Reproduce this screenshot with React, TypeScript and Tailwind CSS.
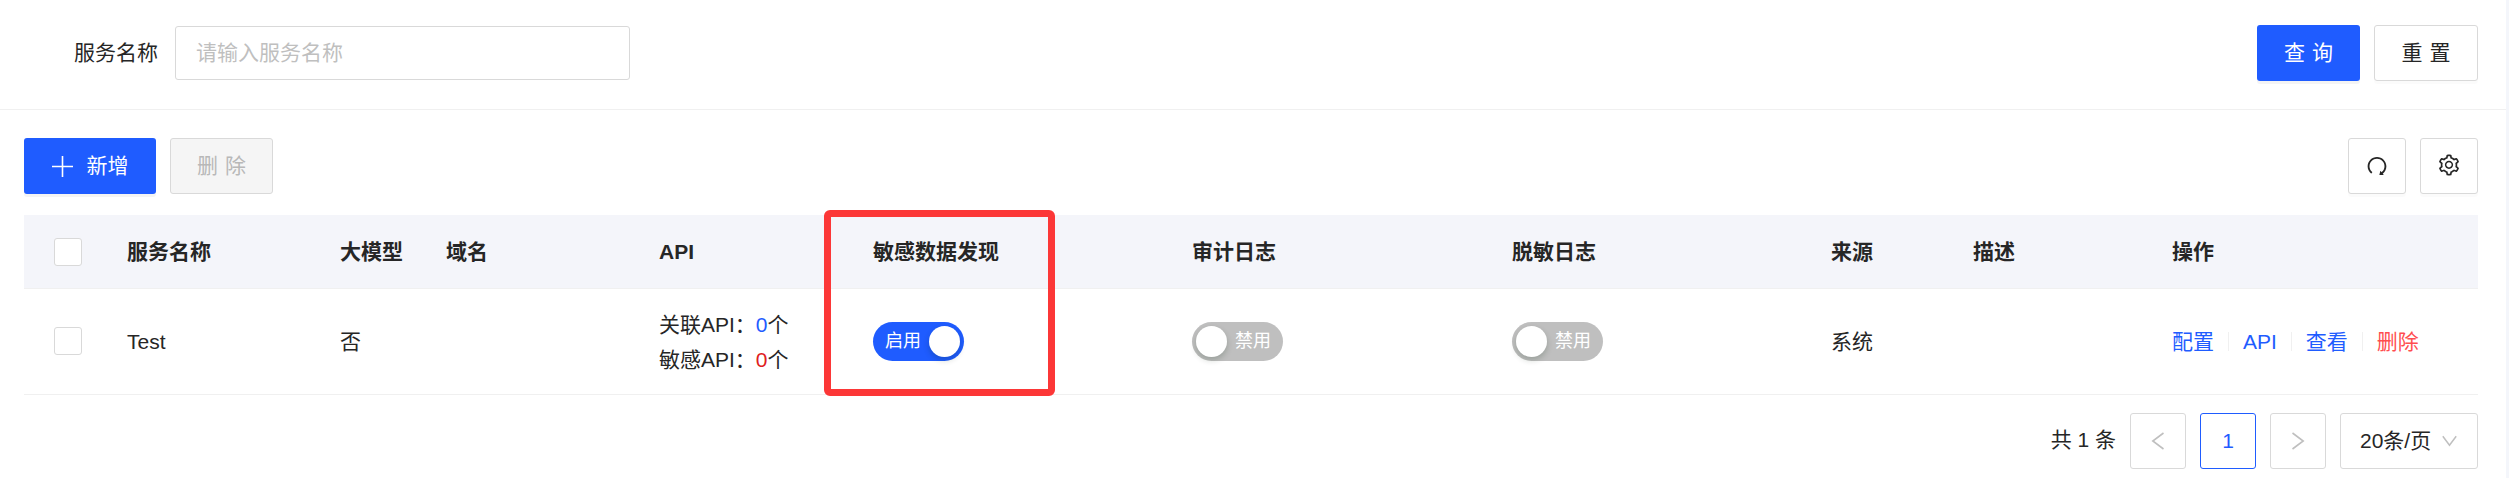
import { useState } from "react";
import clsx from "clsx";
import { AiOutlineRedo, AiOutlineSetting } from "react-icons/ai";

const COLUMNS = [
  { title: "服务名称", width: "w-[213px]" },
  { title: "大模型", width: "w-[106px]" },
  { title: "域名", width: "w-[213px]" },
  { title: "API", width: "w-[214px]" },
  { title: "敏感数据发现", width: "w-[319px]" },
  { title: "审计日志", width: "w-[320px]" },
  { title: "脱敏日志", width: "w-[319px]" },
  { title: "来源", width: "w-[142px]" },
  { title: "描述", width: "w-[199px]" },
  { title: "操作", width: "w-[318px]" },
];

const BTN =
  "flex h-14 items-center justify-center rounded-[3px] border border-[#d9d9d9] bg-white shadow-[0_3px_0_rgba(0,0,0,0.016)]";
const BTN_PRIMARY =
  "flex h-14 items-center justify-center rounded-[3px] bg-[#1f5cff] text-white shadow-[0_3px_0_rgba(0,0,0,0.045)]";
const PAGE_BTN =
  "flex h-14 w-14 items-center justify-center rounded-[3px] border bg-white";

function PlusIcon() {
  return (
    <svg width="21" height="21" viewBox="0 0 21 21" stroke="currentColor" strokeWidth="1.6" aria-hidden="true">
      <path d="M10.5 0v21M0 10.5h21" />
    </svg>
  );
}

function Chevron({ className }: { className?: string }) {
  return (
    <svg
      width="14"
      height="20"
      viewBox="0 0 14 20"
      fill="none"
      stroke="currentColor"
      strokeWidth="1.6"
      className={className}
      aria-hidden="true"
    >
      <path d="M12.5 2 1.8 10l10.7 8" />
    </svg>
  );
}

function Checkbox() {
  return <span className="block h-7 w-7 rounded-[3px] border border-[#d9d9d9] bg-white" />;
}

function Switch({ initial }: { initial: boolean }) {
  const [on, setOn] = useState(initial);
  return (
    <button
      type="button"
      role="switch"
      aria-checked={on}
      onClick={() => setOn((v) => !v)}
      className={clsx(
        "flex h-[39px] w-[91px] items-center justify-between rounded-full text-[18px] leading-none text-white",
        on ? "flex-row bg-[#1f5cff] pr-1 pl-3" : "flex-row-reverse bg-[#bfbfbf] pr-3 pl-1",
      )}
    >
      <span className="-mt-0.5">{on ? "启用" : "禁用"}</span>
      <span className="h-[31px] w-[31px] rounded-full bg-white shadow-[0_3px_6px_rgba(0,35,11,0.2)]" />
    </button>
  );
}

function ActionDivider() {
  return <span className="mx-[14px] h-[19px] w-px bg-[#f0f0f0]" />;
}

export default function App() {
  const [name, setName] = useState("");

  return (
    <div className="flex h-[478px] w-[2509px] overflow-hidden bg-[#f4f6fb] pr-[3px] font-['Liberation_Sans','Noto_Sans_CJK_SC',sans-serif] text-[21px] leading-[33px] text-[#262626]">
      <div className="flex w-[2506px] flex-col bg-white">
        <div className="flex h-[110px] shrink-0 items-start justify-between border-b border-[#f0f0f0] pt-[25px] pr-7 pl-[74px]">
          <div className="flex items-center gap-[17px]">
            <label htmlFor="name">服务名称</label>
            <input
              id="name"
              value={name}
              onChange={(e) => setName(e.target.value)}
              placeholder="请输入服务名称"
              className="mt-px h-[54px] w-[455px] rounded-[3px] border border-[#d9d9d9] px-5 outline-none placeholder:text-[#bfbfbf]"
            />
          </div>
          <div className="flex gap-[14px]">
            <button type="button" className={clsx(BTN_PRIMARY, "w-[103px] gap-[7px] pb-0.5")}>
              <span>查</span>
              <span>询</span>
            </button>
            <button type="button" className={clsx(BTN, "w-[104px] gap-[7px] pb-0.5")}>
              <span>重</span>
              <span>置</span>
            </button>
          </div>
        </div>

        <div className="mr-7 ml-6 flex flex-col">
          <div className="flex justify-between pt-7">
            <div className="flex gap-[14px]">
              <button type="button" className={clsx(BTN_PRIMARY, "w-[132px] gap-[14px]")}>
                <PlusIcon />
                <span className="-mt-0.5">新增</span>
              </button>
              <button
                type="button"
                disabled
                className="flex h-14 w-[103px] items-center justify-center gap-[7px] rounded-[3px] border border-[#d9d9d9] bg-[#f5f5f5] pb-0.5 text-[#b8b8b8]"
              >
                <span>删</span>
                <span>除</span>
              </button>
            </div>
            <div className="flex gap-[14px]">
              <button type="button" aria-label="刷新" className={clsx(BTN, "w-[58px]")}>
                <AiOutlineRedo className="h-6 w-6" />
              </button>
              <button type="button" aria-label="设置" className={clsx(BTN, "w-[58px] pb-0.5")}>
                <AiOutlineSetting className="h-6 w-6" />
              </button>
            </div>
          </div>

          <div className="relative mt-[21px]">
            <table className="w-[2454px] table-fixed border-separate border-spacing-0 text-left">
              <thead>
                <tr className="h-[74px] bg-[#f4f5fa]">
                  <th className="w-[91px] border-b border-[#f0f0f0] pl-[30px]">
                    <Checkbox />
                  </th>
                  {COLUMNS.map((col) => (
                    <th key={col.title} className={clsx(col.width, "border-b border-[#f0f0f0] pl-3 font-bold")}>
                      {col.title}
                    </th>
                  ))}
                </tr>
              </thead>
              <tbody>
                <tr className="h-[106px] *:border-b *:border-[#f0f0f0]">
                  <td className="pb-px pl-[30px]">
                    <Checkbox />
                  </td>
                  <td className="pl-3">Test</td>
                  <td className="pl-3">否</td>
                  <td />
                  <td className="pl-3 leading-[35px]">
                    <div>
                      关联API：<span className="text-[#1f5cff]">0</span>个
                    </div>
                    <div>
                      敏感API：<span className="text-[#e02020]">0</span>个
                    </div>
                  </td>
                  <td className="pl-3">
                    <Switch initial={true} />
                  </td>
                  <td className="pl-3">
                    <Switch initial={false} />
                  </td>
                  <td className="pl-3">
                    <Switch initial={false} />
                  </td>
                  <td className="pl-3">系统</td>
                  <td />
                  <td className="pl-3">
                    <div className="flex items-center text-[#1f5cff]">
                      <a>配置</a>
                      <ActionDivider />
                      <a>API</a>
                      <ActionDivider />
                      <a>查看</a>
                      <ActionDivider />
                      <a className="text-[#ff4d4f]">删除</a>
                    </div>
                  </td>
                </tr>
              </tbody>
            </table>
            {/* highlight around the sensitive data column */}
            <div className="pointer-events-none absolute -top-[5px] left-[800px] h-[186px] w-[231px] rounded-[6px] border-[7px] border-[#fc3737]" />
          </div>

          <div className="flex items-center justify-end gap-[14px] pt-[18px]">
            <span className="-mt-1">共 1 条</span>
            <button type="button" aria-label="上一页" className={clsx(PAGE_BTN, "border-[#d9d9d9] text-[#bfbfbf]")}>
              <Chevron />
            </button>
            <button type="button" className={clsx(PAGE_BTN, "border-[#1f5cff] pb-0.5 text-[#1f5cff]")}>
              1
            </button>
            <button type="button" aria-label="下一页" className={clsx(PAGE_BTN, "border-[#d9d9d9] text-[#bfbfbf]")}>
              <Chevron className="rotate-180" />
            </button>
            <button
              type="button"
              className="flex h-14 w-[138px] items-center justify-between rounded-[3px] border border-[#d9d9d9] pr-5 pl-[19px]"
            >
              <span className="-mt-0.5">20条/页</span>
              <svg
                width="15"
                height="12"
                viewBox="0 0 15 12"
                fill="none"
                stroke="#bfbfbf"
                strokeWidth="1.5"
                aria-hidden="true"
              >
                <path d="M.8 1.2 7.5 10.3 14.2 1.2" />
              </svg>
            </button>
          </div>
        </div>
      </div>
    </div>
  );
}
